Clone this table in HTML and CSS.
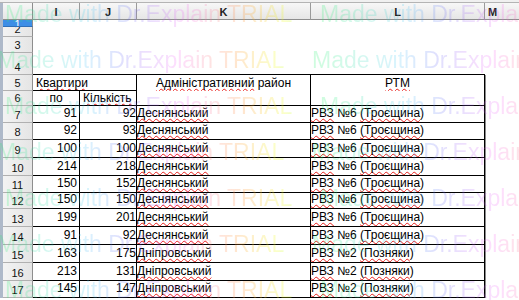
FILE: index.html
```html
<!DOCTYPE html>
<html lang="uk">
<head>
<meta charset="utf-8">
<title>Sheet</title>
<link rel="stylesheet" href="styles.css">
</head>
<body>
<div class="app">
  <div class="top"></div>
  <div class="main">
    <div class="edge"></div>
    <div class="sheet">
      <div class="corner"></div>
      <div class="ch">I</div>
      <div class="ch">J</div>
      <div class="ch">K</div>
      <div class="ch">L</div>
      <div class="ch last">M</div>

      <div class="rh sel">1</div><div></div><div></div><div></div><div></div><div></div>
      <div class="rh">2</div><div></div><div></div><div></div><div></div><div></div>
      <div class="rh">3</div><div></div><div></div><div></div><div></div><div></div>
      <div class="rh">4</div><div class="bb"></div><div class="bb"></div><div class="bb"></div><div class="bb"></div><div></div>

      <div class="rh">5</div>
      <div class="c tight span2 br bb hdr-left"><span class="sp">Квартири</span></div>
      <div class="c tight open br center"><span class="sp">Адміністративний</span>&nbsp;район</div>
      <div class="c tight open brl center"><span class="sp">РТМ</span></div>
      <div></div>

      <div class="rh">6</div>
      <div class="c tight br bb center">по</div>
      <div class="c tight br bb hdr-left"><span class="sp">Кількість</span></div>
      <div class="c br bb"></div>
      <div class="c brl bb"></div>
      <div></div>

      <div class="rh">7</div><div class="c br bb num pi">91</div><div class="c br bb num">92</div><div class="c br bb"><span class="sp">Деснянський</span></div><div class="c brl bb"><span class="sp">РВЗ</span>&nbsp;№6&nbsp;<span class="sp">(Троєщина</span>)</div><div></div>
      <div class="rh">8</div><div class="c br bb num pi">92</div><div class="c br bb num">93</div><div class="c br bb"><span class="sp">Деснянський</span></div><div class="c brl bb"><span class="sp">РВЗ</span>&nbsp;№6&nbsp;<span class="sp">(Троєщина</span>)</div><div></div>
      <div class="rh">9</div><div class="c br bb num pi">100</div><div class="c br bb num">100</div><div class="c br bb"><span class="sp">Деснянський</span></div><div class="c brl bb"><span class="sp">РВЗ</span>&nbsp;№6&nbsp;<span class="sp">(Троєщина</span>)</div><div></div>
      <div class="rh">10</div><div class="c br bb num pi">214</div><div class="c br bb num">218</div><div class="c br bb"><span class="sp">Деснянський</span></div><div class="c brl bb"><span class="sp">РВЗ</span>&nbsp;№6&nbsp;<span class="sp">(Троєщина</span>)</div><div></div>
      <div class="rh">11</div><div class="c br bb num pi">150</div><div class="c br bb num">152</div><div class="c br bb"><span class="sp">Деснянський</span></div><div class="c brl bb"><span class="sp">РВЗ</span>&nbsp;№6&nbsp;<span class="sp">(Троєщина</span>)</div><div></div>
      <div class="rh">12</div><div class="c br bb num pi">150</div><div class="c br bb num">150</div><div class="c br bb"><span class="sp">Деснянський</span></div><div class="c brl bb"><span class="sp">РВЗ</span>&nbsp;№6&nbsp;<span class="sp">(Троєщина</span>)</div><div></div>
      <div class="rh">13</div><div class="c br bb num pi">199</div><div class="c br bb num">201</div><div class="c br bb"><span class="sp">Деснянський</span></div><div class="c brl bb"><span class="sp">РВЗ</span>&nbsp;№6&nbsp;<span class="sp">(Троєщина</span>)</div><div></div>
      <div class="rh">14</div><div class="c br bb num pi">91</div><div class="c br bb num">92</div><div class="c br bb"><span class="sp">Деснянський</span></div><div class="c brl bb"><span class="sp">РВЗ</span>&nbsp;№6&nbsp;<span class="sp">(Троєщина</span>)</div><div></div>
      <div class="rh">15</div><div class="c br bb num pi">163</div><div class="c br bb num">175</div><div class="c br bb"><span class="sp">Дніпровський</span></div><div class="c brl bb"><span class="sp">РВЗ</span>&nbsp;№2&nbsp;<span class="sp">(Позняки</span>)</div><div></div>
      <div class="rh">16</div><div class="c br bb num pi">213</div><div class="c br bb num">131</div><div class="c br bb"><span class="sp">Дніпровський</span></div><div class="c brl bb"><span class="sp">РВЗ</span>&nbsp;№2&nbsp;<span class="sp">(Позняки</span>)</div><div></div>
      <div class="rh">17</div><div class="c br bb num pi">145</div><div class="c br bb num">147</div><div class="c br bb"><span class="sp">Дніпровський</span></div><div class="c brl bb"><span class="sp">РВЗ</span>&nbsp;№2&nbsp;<span class="sp">(Позняки</span>)</div><div></div>
    </div>
  </div>

  <div class="wm" aria-hidden="true">
    <div class="wm-line l1"><span class="wm-unit">Made with Dr.Explain TRIAL</span><span class="wm-unit">Made with Dr.Explain TRIAL</span></div>
    <div class="wm-line l2"><span class="wm-unit">Made with Dr.Explain TRIAL</span><span class="wm-unit">Made with Dr.Explain TRIAL</span></div>
    <div class="wm-line l1"><span class="wm-unit">Made with Dr.Explain TRIAL</span><span class="wm-unit">Made with Dr.Explain TRIAL</span></div>
    <div class="wm-line l2"><span class="wm-unit">Made with Dr.Explain TRIAL</span><span class="wm-unit">Made with Dr.Explain TRIAL</span></div>
    <div class="wm-line l1"><span class="wm-unit">Made with Dr.Explain TRIAL</span><span class="wm-unit">Made with Dr.Explain TRIAL</span></div>
    <div class="wm-line l2"><span class="wm-unit">Made with Dr.Explain TRIAL</span><span class="wm-unit">Made with Dr.Explain TRIAL</span></div>
    <div class="wm-line l1"><span class="wm-unit">Made with Dr.Explain TRIAL</span><span class="wm-unit">Made with Dr.Explain TRIAL</span></div>
  </div>
</div>
</body>
</html>
```
FILE: styles.css
```css
* { box-sizing: border-box; }
html, body { margin: 0; padding: 0; }
body {
  width: 519px;
  height: 300px;
  overflow: hidden;
  background: #fff;
  font-family: "Liberation Sans", Arial, sans-serif;
  color: #000;
}
.app {
  position: relative;
  width: 519px;
  height: 300px;
  overflow: hidden;
}
.top {
  height: 3px;
  background: #f0f0f0;
  border-bottom: 1px solid #b4b4b4;
}
.main {
  display: flex;
}
.edge {
  width: 3px;
  flex: none;
  background: #aeb9c9;
}
.sheet {
  flex: 1;
  display: grid;
  grid-template-columns: 30px 47px 57px 174px 174px 1fr;
  grid-template-rows: 17px 7px 10px 16px 22px 16px 15px 17px 17px 18px 18px 17px 16px 18px 18px 18px 18px 17px;
}
.corner {
  background: linear-gradient(#f7f7f7, #e6e6e6);
  border-right: 1px solid #8e8e8e;
  border-bottom: 1px solid #8e8e8e;
}
.ch {
  background: linear-gradient(#f7f7f7, #e6e6e6);
  border-right: 1px solid #9a9a9a;
  border-bottom: 1px solid #8e8e8e;
  display: flex;
  align-items: center;
  justify-content: center;
  font-size: 11px;
  font-weight: bold;
  color: #222;
  padding-top: 1px;
}
.ch.last {
  border-right: none;
  justify-content: flex-start;
  padding-left: 3px;
}
.rh {
  background: linear-gradient(90deg, #f3f3f3, #e5e5e5);
  border-right: 1px solid #8e8e8e;
  border-bottom: 1px solid #b0b0b0;
  display: flex;
  align-items: flex-end;
  justify-content: center;
  font-size: 11px;
  line-height: 12px;
  padding-bottom: 1px;
  color: #111;
  overflow: hidden;
}
.rh.sel {
  background: #3d8ee6;
  color: #fff;
  border-bottom-color: #2f6fb8;
  align-items: flex-start;
  line-height: 9px;
}
.bb { border-bottom: 1px solid #000; }
.br { border-right: 1px solid #000; }
.brl {
  border-right: 1px solid #000;
  box-shadow: 1px 0 0 #8a8a8a;
}
.c {
  display: flex;
  align-items: flex-end;
  font-size: 12px;
  line-height: 15px;
  padding-bottom: 1px;
  white-space: nowrap;
  overflow: hidden;
}
.c.tight {
  line-height: 13px;
  padding-bottom: 0;
}
.c.tight.open {
  padding-bottom: 1px;
}
.span2 { grid-column: span 2; }
.center { justify-content: center; }
.hdr-left { padding-left: 3px; }
.num { justify-content: flex-end; }
.pi { padding-right: 2px; }
.sp {
  text-decoration: underline wavy #e8201c;
  text-decoration-thickness: 1px;
  text-underline-offset: 1px;
  text-decoration-skip-ink: none;
}
.wm {
  position: absolute;
  left: 0;
  top: -9px;
  width: 700px;
  pointer-events: none;
  font-family: "Liberation Sans", Arial, sans-serif;
  font-size: 23px;
  line-height: 46px;
  white-space: nowrap;
}
.wm-line.l1 { margin-left: 5px; }
.wm-line.l2 { margin-left: -3px; }
.wm-unit {
  display: inline-block;
  width: 315px;
  background: linear-gradient(90deg,
    hsla(140, 90%, 55%, .22) 0px,
    hsla(195, 90%, 60%, .20) 85px,
    hsla(240, 90%, 68%, .20) 125px,
    hsla(300, 90%, 66%, .20) 180px,
    hsla(390, 100%, 60%, .24) 240px,
    hsla(425, 100%, 55%, .24) 280px,
    hsla(480, 90%, 55%, .22) 315px);
  -webkit-background-clip: text;
  background-clip: text;
  color: transparent;
}
```
